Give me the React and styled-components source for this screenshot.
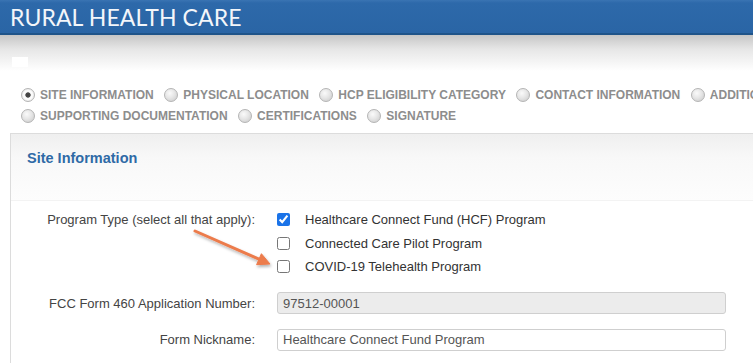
import React from 'react';
import styled, { createGlobalStyle } from 'styled-components';

const GlobalStyle = createGlobalStyle`
    body {
        margin: 0;
        background: #fff;
        overflow: hidden;
        font-family: "Liberation Sans", Arial, sans-serif;
    }
`;

const steps = [
    { name: 'SITE INFORMATION', active: true },
    { name: 'PHYSICAL LOCATION' },
    { name: 'HCP ELIGIBILITY CATEGORY' },
    { name: 'CONTACT INFORMATION' },
    { name: 'ADDITIONAL INFORMATION' },
    { name: 'SUPPORTING DOCUMENTATION' },
    { name: 'CERTIFICATIONS' },
    { name: 'SIGNATURE' },
];

const programs = [
    { name: 'Healthcare Connect Fund (HCF) Program', checked: true },
    { name: 'Connected Care Pilot Program' },
    { name: 'COVID-19 Telehealth Program' },
];

const App = () => {
    return (
        <Page>
            <GlobalStyle />
            <Banner>RURAL HEALTH CARE</Banner>
            <Shade>
                <Ghost />
            </Shade>

            {/* wizard steps */}
            <StepList>
                {steps.map(s => (
                    <Step key={s.name}>
                        <StepDot active={s.active} />
                        {s.name}
                    </Step>
                ))}
            </StepList>

            <Panel>
                <PanelHeading>Site Information</PanelHeading>
                <PanelBody>
                    <FormRow>
                        <Label>Program Type (select all that apply):</Label>
                        <CheckList>
                            {programs.map(p => (
                                <CheckItem key={p.name}>
                                    <Check type="checkbox" defaultChecked={p.checked} />
                                    {p.name}
                                </CheckItem>
                            ))}
                        </CheckList>
                    </FormRow>
                    <FormRow center>
                        <Label>FCC Form 460 Application Number:</Label>
                        <TextInput readOnly grey defaultValue="97512-00001" />
                    </FormRow>
                    <FormRow center>
                        <Label>Form Nickname:</Label>
                        <TextInput defaultValue="Healthcare Connect Fund Program" />
                    </FormRow>

                    {/* callout arrow */}
                    <Arrow width="90" height="50" viewBox="0 0 90 50">
                        <defs>
                            <filter id="soft" x="-20%" y="-40%" width="140%" height="180%">
                                <feDropShadow dx="1" dy="2" stdDeviation="1.5" floodColor="#000" floodOpacity="0.3" />
                            </filter>
                        </defs>
                        <g filter="url(#soft)" fill="#ec7b4c" stroke="#ec7b4c">
                            <line x1="5" y1="6" x2="69" y2="34.2" strokeWidth="3" strokeLinecap="round" />
                            <polygon points="80,39 66.6,39.7 71.4,28.7" strokeWidth="1" strokeLinejoin="round" />
                        </g>
                    </Arrow>
                </PanelBody>
            </Panel>
        </Page>
    );
};

export default App;

const Page = styled.div`
    width: 960px;
    min-height: 363px;
`;

const Banner = styled.div`
    height: 33px;
    line-height: 34px;
    padding-left: 10px;
    background: linear-gradient(to bottom, #3a74b3 0, #2d69aa 3px, #2a65a5 100%);
    border-bottom: 2px solid #1f5489;
    color: #f3f6fa;
    font-family: Lato, "Open Sans", sans-serif;
    font-size: 23px;
    letter-spacing: 0.1px;
`;

const Shade = styled.div`
    height: 49px;
    background: linear-gradient(to bottom, #c6c6c6 0, #e6e6e6 14px, #fff 36px);
    display: flex;
    align-items: flex-start;
`;

const Ghost = styled.div`
    width: 16px;
    height: 10px;
    margin: 22px 0 0 12px;
    background: #fff;
`;

const StepList = styled.div`
    display: flex;
    flex-wrap: wrap;
    width: 900px;
    padding-left: 21px;
`;

const Step = styled.div`
    display: flex;
    align-items: center;
    gap: 5px;
    height: 21px;
    margin-right: 10.5px;
    color: #8d8d8d;
    font-size: 12px;
    font-weight: bold;
    white-space: nowrap;
`;

const StepDot = styled.span`
    width: 12px;
    height: 12px;
    border-radius: 50%;
    border: 1px solid #b4b4b4;
    background: ${p => p.active
        ? 'radial-gradient(circle at 50% 50%, #3c3c3c 0, #4a4a4a 2.3px, #f4f4f4 3px, #fff 4px, #d4d4d4 100%)'
        : 'radial-gradient(circle at 40% 35%, #fafafa 0, #e6e6e6 45%, #c8c8c8 100%)'};
    box-sizing: content-box;
    flex-shrink: 0;
`;

const Panel = styled.div`
    margin: 7px 0 0 10px;
    border: 1px solid #dcdcdc;
    border-right: none;
    min-height: 240px;
`;

const PanelHeading = styled.div`
    height: 52px;
    padding: 14px 0 0 16px;
    background: linear-gradient(to bottom, #efefef 0, #f8f8f8 35%, #fdfdfd 100%);
    border-bottom: 1px solid #f3f3f3;
    color: #2f6aa6;
    font-size: 14.5px;
    font-weight: bold;
    line-height: 20px;
`;

const PanelBody = styled.div`
    position: relative;
    padding-top: 7px;
    display: flex;
    flex-direction: column;
    gap: 13px;
`;

const FormRow = styled.div`
    display: grid;
    grid-template-columns: 244px 449px;
    column-gap: 22px;
    align-items: ${p => (p.center ? 'center' : 'start')};
`;

const Label = styled.div`
    text-align: right;
    color: #444;
    font-size: 13px;
    line-height: 23.5px;
`;

const CheckList = styled.div`
    display: flex;
    flex-direction: column;
`;

const CheckItem = styled.label`
    display: flex;
    align-items: center;
    gap: 15px;
    height: 23.5px;
    color: #333;
    font-size: 13px;
`;

const Check = styled.input`
    width: 13px;
    height: 13px;
    margin: 0;
    accent-color: #1a73e8;
`;

const TextInput = styled.input`
    box-sizing: border-box;
    width: 449px;
    height: 22px;
    padding: 0 5px;
    border: 1px solid #cfcfcf;
    border-radius: 3px;
    background: ${p => (p.grey ? '#ececec' : '#fff')};
    color: #555;
    font-family: "Liberation Sans", Arial, sans-serif;
    font-size: 13px;
    outline: none;
`;

const Arrow = styled.svg`
    position: absolute;
    left: 179px;
    top: 24px;
    overflow: visible;
`;
